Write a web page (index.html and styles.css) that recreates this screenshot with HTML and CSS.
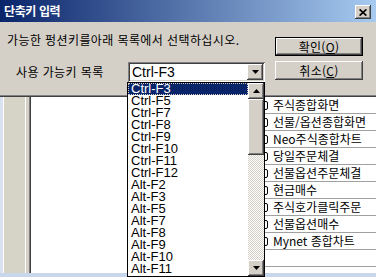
FILE: index.html
```html
<!DOCTYPE html>
<html lang="ko">
<head>
  <meta charset="UTF-8" />
  <title>단축키 입력</title>
  <link rel="stylesheet" href="styles.css">
</head>
<body>
  <div class="window">
    <div class="titlebar">
      <span class="caption">단축키 입력</span>
      <span class="close raised">
        <svg width="8" height="7" viewBox="0 0 8 7"><path d="M0.6 0.4 L7.4 6.6 M7.4 0.4 L0.6 6.6" stroke="#000" stroke-width="1.7"/></svg>
      </span>
    </div>

    <div class="dialog">
      <div class="form">
        <div class="hint">가능한 펑션키를아래 목록에서 선택하십시오.</div>
        <div class="field">
          <span class="label">사용 가능키 목록</span>
          <div class="combo">
            <span class="combo-text">Ctrl-F3</span>
            <span class="arrow raised">
              <svg width="7" height="4" viewBox="0 0 7 4"><polygon points="0,0 7,0 3.5,4" fill="#000"/></svg>
            </span>
          </div>
        </div>
      </div>
      <div class="actions">
        <button class="btn default raised">확인(<u>O</u>)</button>
        <button class="btn raised">취소(<u>C</u>)</button>
      </div>
    </div>

    <div class="app">
      <div class="side"></div>
      <div class="canvas"></div>
      <ul class="screens">
        <li><i></i>주식종합화면</li>
        <li><i></i>선물/옵션종합화면</li>
        <li><i></i>Neo주식종합차트</li>
        <li><i></i>당일주문체결</li>
        <li><i></i>선물옵션주문체결</li>
        <li><i></i>현금매수</li>
        <li><i></i>주식호가클릭주문</li>
        <li><i></i>선물옵션매수</li>
        <li><i></i>Mynet 종합차트</li>
        <li></li>
        <li></li>
      </ul>
    </div>
    <div class="frame-bottom"></div>

    <!-- 콤보박스 펼침 목록 -->
    <div class="dropdown">
      <ul class="keys">
        <li class="sel">Ctrl-F3</li>
        <li>Ctrl-F5</li>
        <li>Ctrl-F7</li>
        <li>Ctrl-F8</li>
        <li>Ctrl-F9</li>
        <li>Ctrl-F10</li>
        <li>Ctrl-F11</li>
        <li>Ctrl-F12</li>
        <li>Alt-F2</li>
        <li>Alt-F3</li>
        <li>Alt-F5</li>
        <li>Alt-F7</li>
        <li>Alt-F8</li>
        <li>Alt-F9</li>
        <li>Alt-F10</li>
        <li>Alt-F11</li>
      </ul>
      <div class="scrollbar">
        <span class="sb-btn raised">
          <svg width="7" height="4" viewBox="0 0 7 4"><polygon points="0,4 7,4 3.5,0" fill="#000"/></svg>
        </span>
        <span class="thumb raised"></span>
        <span class="track"></span>
        <span class="sb-btn raised">
          <svg width="7" height="4" viewBox="0 0 7 4"><polygon points="0,0 7,0 3.5,4" fill="#000"/></svg>
        </span>
      </div>
    </div>
  </div>
</body>
</html>
```

FILE: styles.css
```css
* {
  box-sizing: border-box;
}

body {
  margin: 0;
  width: 376px;
  height: 277px;
  overflow: hidden;
  background: #d4d0c8;
  font-family: "Noto Sans CJK KR", "Noto Sans", sans-serif;
  color: #000;
}

.window {
  position: relative;
  width: 376px;
  height: 277px;
  display: flex;
  flex-direction: column;
}

.raised {
  background: #d4d0c8;
  box-shadow:
    inset -1px -1px #404040,
    inset 1px 1px #fff,
    inset -2px -2px #808080,
    inset 2px 2px #d4d0c8;
}

/* 제목 표시줄 */
.titlebar {
  height: 22px;
  flex: none;
  background: linear-gradient(to right, #0a246a, #a6caf0);
  display: flex;
  align-items: center;
  justify-content: space-between;
  padding: 0 5px 0 4px;
}

.caption {
  color: #fff;
  font-weight: bold;
  font-size: 12px;
  line-height: 14px;
  letter-spacing: -0.4px;
}

.close {
  width: 16px;
  height: 14px;
  margin-top: 2px;
  display: flex;
  align-items: center;
  justify-content: center;
}

/* 대화상자 본문 */
.dialog {
  height: 75px;
  flex: none;
  display: flex;
  box-shadow: inset 0 -1px #404040, inset 0 -2px #808080;
}

.form {
  width: 275px;
  padding: 11px 0 0 7px;
}

.hint {
  font-size: 12px;
  line-height: 14px;
  letter-spacing: 0.4px;
  white-space: nowrap;
}

.field {
  display: flex;
  align-items: center;
  margin-top: 15px;
}

.label {
  width: 121px;
  padding-left: 9px;
  font-size: 12px;
  line-height: 14px;
  letter-spacing: 0.4px;
}

.combo {
  width: 137px;
  height: 20px;
  padding: 2px;
  display: flex;
  align-items: center;
  background: #fff;
  box-shadow:
    inset 1px 1px #808080,
    inset -1px -1px #fff,
    inset 2px 2px #404040,
    inset -2px -2px #d4d0c8;
}

.combo-text {
  flex: 1;
  padding-left: 2px;
  font-family: "Liberation Sans", Arial, sans-serif;
  font-size: 14px;
  line-height: 16px;
}

.arrow {
  width: 16px;
  height: 16px;
  display: flex;
  align-items: center;
  justify-content: center;
}

.actions {
  width: 88px;
  padding-top: 15px;
  display: flex;
  flex-direction: column;
  gap: 5px;
}

.btn {
  width: 88px;
  height: 19px;
  padding: 0;
  border: none;
  font-family: "Noto Sans CJK KR", sans-serif;
  font-size: 12px;
  line-height: 14px;
  letter-spacing: 0.3px;
  color: #000;
}

.btn.default {
  border: 1px solid #000;
}

/* 뒤쪽 화면 */
.app {
  height: 176px;
  flex: none;
  display: flex;
  background: #fff;
}

.side {
  width: 31px;
  background: linear-gradient(to right,
    #d8e2f0 0 3px, #fff 3px 4px, #d6d4c6 4px 25px, #fff 25px 26px,
    #d4d0c8 26px 29px, #808080 29px 30px, #404040 30px 31px);
}

.canvas {
  flex: 1;
}

.screens {
  width: 124px;
  margin: 0;
  padding: 0;
  list-style: none;
  overflow: hidden;
}

.screens li {
  height: 17px;
  border-bottom: 1px solid #a0a0a0;
  display: flex;
  align-items: center;
  padding-left: 6px;
  font-size: 12px;
  line-height: 16px;
  white-space: nowrap;
}

.screens li i {
  flex: none;
  width: 10px;
  height: 9px;
  margin-right: 5px;
  border: 1px solid #000;
  border-radius: 2px;
}

.frame-bottom {
  height: 4px;
  flex: none;
  background: #c9d7ec;
}

/* 펼침 목록 */
.dropdown {
  position: absolute;
  left: 127px;
  top: 82px;
  width: 138px;
  height: 195px;
  border: 1px solid #000;
  background: #fff;
  display: flex;
}

.keys {
  flex: 1;
  margin: 0;
  padding: 0;
  list-style: none;
  font-family: "Liberation Sans", Arial, sans-serif;
  font-size: 13px;
  line-height: 12px;
}

.keys li {
  height: 12px;
  padding-left: 3px;
  white-space: nowrap;
}

.keys li.sel {
  background: #0a246a;
  color: #fff;
  outline: 1px dotted #d4d0c8;
  outline-offset: -1px;
}

.scrollbar {
  width: 16px;
  display: flex;
  flex-direction: column;
}

.sb-btn {
  height: 16px;
  display: flex;
  align-items: center;
  justify-content: center;
}

.thumb {
  height: 56px;
}

.track {
  flex: 1;
  background: repeating-conic-gradient(#d4d0c8 0 25%, #fff 0 50%) 0 0 / 2px 2px;
}
```
